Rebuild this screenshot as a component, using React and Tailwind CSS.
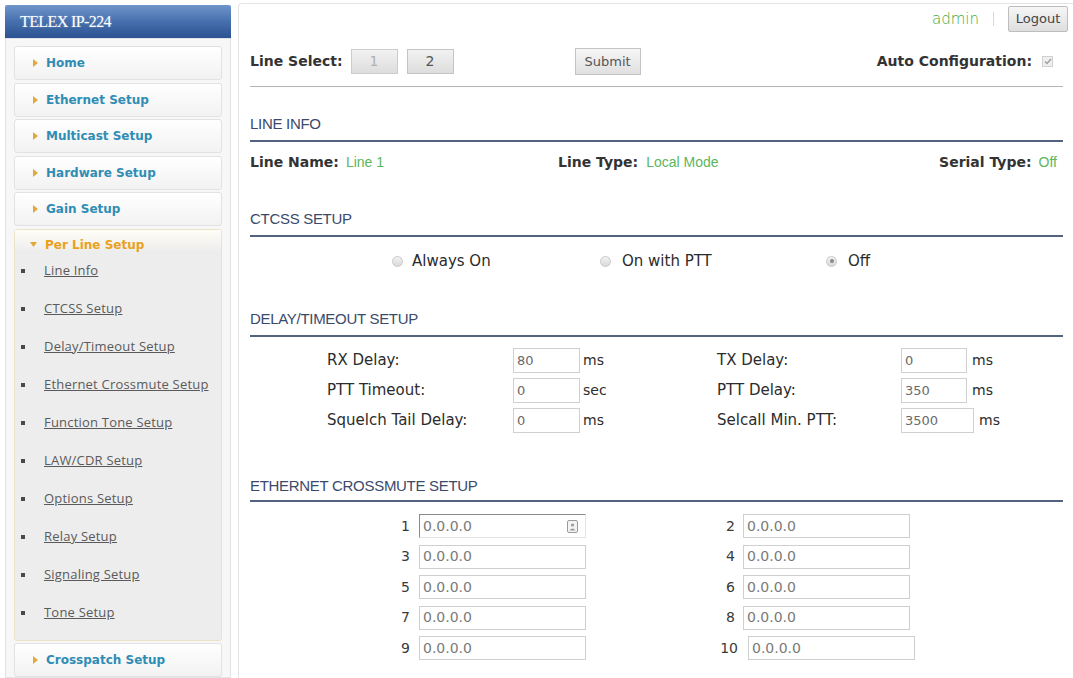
import React from 'react';

const menuTop = ['Home', 'Ethernet Setup', 'Multicast Setup', 'Hardware Setup', 'Gain Setup'];
const subMenu = [
    'Line Info',
    'CTCSS Setup',
    'Delay/Timeout Setup',
    'Ethernet Crossmute Setup',
    'Function Tone Setup',
    'LAW/CDR Setup',
    'Options Setup',
    'Relay Setup',
    'Signaling Setup',
    'Tone Setup',
];

const Arrow = () => (
    <svg width="5" height="8" viewBox="0 0 5 8" className="shrink-0">
        <path d="M0 0 L5 4 L0 8 Z" fill="#e2a93a" />
    </svg>
);

const MenuItem = ({label}) => (
    <div className="h-[34px] flex items-center gap-[8px] pl-[18px] rounded-[3px] border border-[#e2e2e2] bg-gradient-to-b from-white to-[#f2f2f2]">
        <Arrow />
        <a href="#" className="text-[12px] font-bold text-[#2f8db5] font-['DejaVu_Sans',sans-serif]">{label}</a>
    </div>
);

const Heading = ({children}) => (
    <div>
        <div className="h-[16px] leading-[16px] text-[15px] text-[#3b4a6b] uppercase tracking-[-0.3px] font-['Liberation_Sans',sans-serif]">{children}</div>
        <div className="mt-[8px] h-[2px] bg-[#53627f]" />
    </div>
);

const Radio = ({checked}) => (
    <span className="w-[11px] h-[11px] rounded-full border border-[#c9c9c9] bg-gradient-to-b from-[#f3f3f3] to-[#d9d9d9] flex items-center justify-center">
        {checked && <span className="w-[4px] h-[4px] rounded-full bg-[#8a8a8a]" />}
    </span>
);

const Field = ({value, w}) => (
    <div className={`${w} h-[25px] border border-[#d0d0d0] bg-white flex items-center pl-[3px] text-[13px] text-[#6a6a6a] font-['DejaVu_Sans',sans-serif]`}>
        {value}
    </div>
);

const DelayRow = ({l1, v1, u1, l2, v2, u2, w2, g2}) => (
    <div className="h-[25px] flex items-center text-[15px] text-[#2c2c2c] font-['DejaVu_Sans',sans-serif]">
        <span className="w-[186px]">{l1}</span>
        <Field value={v1} w="w-[67px]" />
        <span className="w-[137px] pl-[3px] text-[14px]">{u1}</span>
        <span className="w-[184px]">{l2}</span>
        <Field value={v2} w={w2} />
        <span className={`${g2} text-[14px]`}>{u2}</span>
    </div>
);

const IpField = ({first, w = 'w-[167px]'}) => (
    <div
        className={`${w} h-[24px] bg-white flex items-center pl-[3px] text-[14px] text-[#7a7a7a] font-['DejaVu_Sans',sans-serif] border ${
            first ? 'border-t-[#8a8a8a] border-l-[#8a8a8a] border-r-[#e4e4e4] border-b-[#e4e4e4]' : 'border-[#cfcfcf]'
        }`}
    >
        <span className="flex-1">0.0.0.0</span>
        {first && (
            <svg width="11" height="13" viewBox="0 0 11 13" className="mr-[7px]">
                <rect x="0.5" y="0.5" width="10" height="12" rx="1.5" fill="#f4f4f4" stroke="#9a9a9a" />
                <circle cx="5.5" cy="5" r="1.6" fill="#9a9a9a" />
                <path d="M2.5 10.5 Q5.5 6.5 8.5 10.5 Z" fill="#9a9a9a" />
            </svg>
        )}
    </div>
);

const IpRow = ({a, b, last}) => (
    <div className="h-[24px] flex items-center text-[14px] text-[#3a3a3a] font-['DejaVu_Sans',sans-serif]">
        <span className="w-[160px] text-right">{a}</span>
        <span className="w-[9px]" />
        <IpField first={a === 1} />
        <span className={`${last ? 'w-[152px]' : 'w-[149px]'} text-right`}>{b}</span>
        <span className={last ? 'w-[10px]' : 'w-[8px]'} />
        <IpField />
    </div>
);

const App = () => {
    return (
        <div className="w-[1073px] h-[678px] overflow-hidden bg-white flex font-['DejaVu_Sans',sans-serif]">
            {/* sidebar */}
            <aside className="w-[226px] ml-[5px] mt-[5px] flex flex-col shrink-0">
                <div className="h-[34px] flex items-center pl-[15px] rounded-t-[2px] bg-gradient-to-b from-[#7096cb] via-[#4670ad] to-[#2c5291] text-white text-[16px] tracking-[-0.6px] font-['Liberation_Serif',serif] [text-shadow:0_0_2px_rgba(255,255,255,0.35)]">
                    TELEX IP-224
                </div>
                <div className="flex-1 border border-[#e0e3e8] bg-[#f7f7f7] px-[8px] pt-[7px] flex flex-col gap-[2.5px]">
                    {menuTop.map((m) => (
                        <MenuItem key={m} label={m} />
                    ))}
                    <div className="rounded-[3px] border border-[#ebe3c8] bg-[#ededed] pb-[8px]">
                        <div className="pt-[8px] h-[22px] flex items-center gap-[8px] pl-[15px] bg-gradient-to-b from-[#fffdf6] to-[#ededed]">
                            <svg width="7" height="5" viewBox="0 0 7 5">
                                <path d="M0 0 L7 0 L3.5 5 Z" fill="#e2a93a" />
                            </svg>
                            <span className="text-[12px] font-bold text-[#e9a11c]">Per Line Setup</span>
                        </div>
                        {subMenu.map((s) => (
                            <div key={s} className="h-[38px] flex items-center pl-[6px]">
                                <span className="w-[4px] h-[4px] bg-[#4a4a4a]" />
                                <a href="#" className="ml-[19px] underline text-[13px] tracking-[0.2px] text-[#5a5a5a] font-['Open_Sans',sans-serif]">{s}</a>
                            </div>
                        ))}
                    </div>
                    <MenuItem label="Crosspatch Setup" />
                </div>
            </aside>

            {/* main panel */}
            <main className="flex-1 ml-[7px] mt-[3px] border-t border-l border-[#e4e4e4] rounded-tl-[4px] pl-[11px] pr-[10px] flex flex-col">
                <div className="h-[28px] -mr-[5px] pt-[2px] flex items-center justify-end">
                    <span className="text-[15px] text-[#3ea83e] font-light">admin</span>
                    <span className="mx-[14px] w-px h-[14px] bg-[#d8d8d8]" />
                    <button className="h-[26px] w-[60px] border border-[#bdbdbd] rounded-[2px] bg-gradient-to-b from-[#f6f6f6] to-[#dedede] text-[13px] text-[#444]">Logout</button>
                </div>

                <div className="mt-[16px] h-[27px] flex items-center">
                    <span className="text-[14px] font-bold text-[#333]">Line Select:</span>
                    <button className="ml-[8px] h-[25px] w-[47px] border border-[#cccccc] bg-gradient-to-b from-[#f2f2f2] to-[#dddddd] text-[14px] text-[#b0b0b0]">1</button>
                    <button className="ml-[9px] h-[25px] w-[47px] border border-[#c4c4c4] bg-gradient-to-b from-[#f2f2f2] to-[#dddddd] text-[14px] text-[#555]">2</button>
                    <button className="ml-[121px] h-[27px] w-[66px] border border-[#c4c4c4] bg-gradient-to-b from-[#f6f6f6] to-[#e0e0e0] text-[13px] text-[#555]">Submit</button>
                    <span className="ml-auto text-[14px] font-bold text-[#333]">Auto Configuration:</span>
                    <span className="ml-[10px] mr-[10px] w-[11px] h-[11px] border border-[#d0d0d0] bg-[#efefef] flex items-center justify-center">
                        <svg width="8" height="7" viewBox="0 0 8 7">
                            <path d="M1 3.5 L3 5.5 L7 1" stroke="#a0a0a0" strokeWidth="1.5" fill="none" />
                        </svg>
                    </span>
                </div>
                <div className="mt-[11px] h-px bg-[#b4b4b4]" />

                <div className="mt-[29px]">
                    <Heading>Line Info</Heading>
                </div>
                <div className="mt-[10px] h-[20px] flex items-center text-[14px]">
                    <div className="w-[308px]">
                        <span className="font-bold text-[#333]">Line Name:</span>
                        <span className="ml-[7px] text-[#5cb65c] font-light font-['Liberation_Sans',sans-serif]">Line 1</span>
                    </div>
                    <div>
                        <span className="font-bold text-[#333]">Line Type:</span>
                        <span className="ml-[8px] text-[#5cb65c] font-light font-['Liberation_Sans',sans-serif]">Local Mode</span>
                    </div>
                    <div className="ml-auto mr-[6px]">
                        <span className="font-bold text-[#333]">Serial Type:</span>
                        <span className="ml-[7px] text-[#5cb65c] font-light font-['Liberation_Sans',sans-serif]">Off</span>
                    </div>
                </div>

                <div className="mt-[39px]">
                    <Heading>CTCSS Setup</Heading>
                </div>
                <div className="mt-[14px] h-[20px] flex items-center pl-[142px] text-[15px] text-[#2c2c2c]">
                    <div className="w-[208px] flex items-center gap-[9px]">
                        <Radio />
                        <span>Always On</span>
                    </div>
                    <div className="w-[226px] flex items-center gap-[11px]">
                        <Radio />
                        <span>On with PTT</span>
                    </div>
                    <div className="flex items-center gap-[11px]">
                        <Radio checked />
                        <span>Off</span>
                    </div>
                </div>

                <div className="mt-[40px]">
                    <Heading>Delay/Timeout Setup</Heading>
                </div>
                <div className="mt-[11px] pl-[77px] flex flex-col gap-[5px]">
                    <DelayRow l1="RX Delay:" v1="80" u1="ms" l2="TX Delay:" v2="0" u2="ms" w2="w-[66px]" g2="pl-[5px]" />
                    <DelayRow l1="PTT Timeout:" v1="0" u1="sec" l2="PTT Delay:" v2="350" u2="ms" w2="w-[66px]" g2="pl-[5px]" />
                    <DelayRow l1="Squelch Tail Delay:" v1="0" u1="ms" l2="Selcall Min. PTT:" v2="3500" u2="ms" w2="w-[73px]" g2="pl-[5px]" />
                </div>

                <div className="mt-[45px]">
                    <div className="h-[16px] leading-[16px] text-[15px] text-[#3b4a6b] uppercase tracking-[-0.3px] font-['Liberation_Sans',sans-serif]">Ethernet Crossmute Setup</div>
                    <div className="mt-[6px] h-[2px] bg-[#53627f]" />
                </div>
                <div className="mt-[12px] flex flex-col gap-[6.5px]">
                    <IpRow a={1} b={2} />
                    <IpRow a={3} b={4} />
                    <IpRow a={5} b={6} />
                    <IpRow a={7} b={8} />
                    <IpRow a={9} b={10} last />
                </div>
            </main>
        </div>
    );
};

export default App;
